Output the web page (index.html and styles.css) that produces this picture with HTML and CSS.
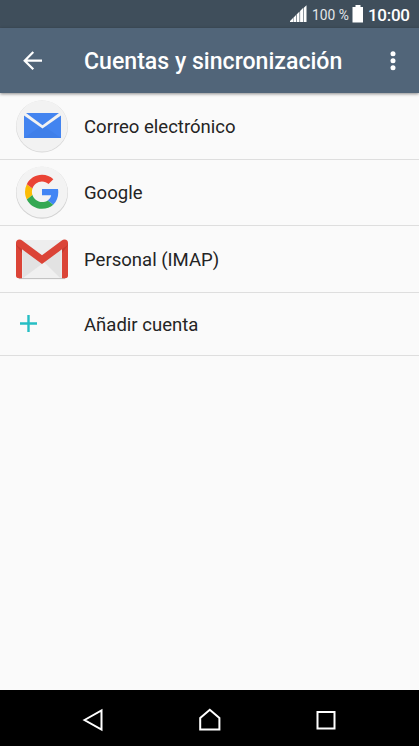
FILE: index.html
```html
<!DOCTYPE html>
<html lang="es">
<head>
<meta charset="utf-8">
<title>Cuentas y sincronización</title>
<link rel="stylesheet" href="styles.css">
</head>
<body>
<div class="phone">
  <div class="status">
    <svg class="signal" width="18" height="18" viewBox="0 0 18 18" fill="#fff"><path d="M0 17v-1l3-3v4zM3.400 17v-4.300L6 10v7zM6.600 17V9.400L9.500 6.500V17zM10.100 17V6L13 3.100V17zM13.600 17V3L16.500.3V17z"/></svg>
    <span class="percent">100 %</span>
    <svg class="battery" width="12" height="18" viewBox="0 0 12 18" fill="#fff"><path d="M3.500 0h5v2H11v15.500H.5V2h3z"/></svg>
    <span class="clock">10:00</span>
  </div>
  <header class="bar">
    <svg class="back" width="20" height="20" viewBox="0 0 20 20" fill="none" stroke="#fff" stroke-width="2.200"><path d="M10.300 1L1.700 9.700l8.600 8.600M2 9.700h17"/></svg>
    <h1 class="title">Cuentas y sincronización</h1>
    <svg class="more" width="6" height="20" viewBox="0 0 6 20" fill="#fff"><circle cx="3" cy="2.700" r="2.500"/><circle cx="3" cy="9.700" r="2.500"/><circle cx="3" cy="16.700" r="2.500"/></svg>
  </header>
  <ul class="list">
    <li class="row">
      <span class="icon"><svg width="56" height="56" viewBox="0 0 56 56">
        <circle cx="28" cy="28.400" r="26" fill="#d8d8d8"/><circle cx="28" cy="28" r="25.600" fill="#f2f2f2"/>
        <path d="M10 15h37v25H10z" fill="#4384f0"/><path d="M10 40l18.500-13L47 40z" fill="#3f7fe9"/>
        <path d="M10 15h37v2.500L28.500 30.500 10 17.500z" fill="#f2f2f2"/><path d="M12 15h33L28.500 27.300z" fill="#4384f0"/>
      </svg></span>
      <span class="label">Correo electrónico</span>
    </li>
    <li class="row">
      <span class="icon"><svg width="56" height="56" viewBox="0 0 56 56">
        <circle cx="28" cy="28.700" r="26" fill="#d2d2d2"/><circle cx="28" cy="28" r="25.600" fill="#f3f3f3"/>
        <g transform="translate(11 10.800) scale(.708)">
        <path fill="#4285f4" d="M46.980 24.550c0-1.570-.15-3.090-.38-4.550H24v9.020h12.940c-.58 2.960-2.260 5.480-4.780 7.180l7.730 6c4.510-4.180 7.090-10.360 7.090-17.650z"/>
        <path fill="#fbbc05" d="M10.530 28.590A14.500 14.500 0 0 1 9.770 24c0-1.600.27-3.140.76-4.590l-7.980-6.190A23.900 23.900 0 0 0 0 24c0 3.880.92 7.540 2.560 10.780z"/>
        <path fill="#ea4335" d="M24 9.500c3.540 0 6.710 1.220 9.210 3.600l6.850-6.850C35.900 2.380 30.470 0 24 0 14.620 0 6.510 5.380 2.560 13.220l7.980 6.190C12.430 13.720 17.740 9.500 24 9.500z"/>
        <path fill="#34a853" d="M24 48c6.480 0 11.930-2.130 15.890-5.810l-7.730-6c-2.150 1.450-4.920 2.300-8.160 2.300-6.260 0-11.570-4.220-13.470-9.910l-7.980 6.190C6.510 42.620 14.620 48 24 48z"/>
        </g>
      </svg></span>
      <span class="label">Google</span>
    </li>
    <li class="row">
      <span class="icon"><svg width="56" height="56" viewBox="0 0 56 56">
        <path d="M5 47.600h46" stroke="#bdbdbd" stroke-width="1"/>
        <rect x="4" y="9" width="48" height="38" fill="#e9e9e9"/>
        <path d="M8 47l20-18 18 18z" fill="#f0f0f0"/><path d="M9 19l19 14L9 47z" fill="#e2e2e2"/><path d="M8.500 18v7l8 6 12-1.500 18 17.500V18L28 32z" fill="#e2e2e2"/>
        <path d="M8 9h40L28 24z" fill="#eee"/>
        <path fill="#db4437" d="M2 12q0-3.500 3.500-3.500 1.500 0 3 1.200L28 24.300 47.500 9.700q1.500-1.200 3-1.200Q54 8.500 54 12v32.500q0 2.700-2.700 2.700H48V18.300L28 33 8 18.300v28.900H4.700Q2 47.200 2 44.500z"/>
        <path d="M2 12q0 1.800 1.500 3L8 18.300v4L2 14zM54 12q0 1.800-1.500 3L48 18.300v4l6-8.300z" fill="#c53a30"/>
      </svg></span>
      <span class="label">Personal (IMAP)</span>
    </li>
    <li class="row add">
      <span class="icon"><svg class="plus" width="18" height="18" viewBox="0 0 18 18" stroke="#26bec4" stroke-width="2.400"><path d="M8.500 0v17M0 8.500h17"/></svg></span>
      <span class="label">Añadir cuenta</span>
    </li>
  </ul>
  <nav class="nav">
    <svg width="24" height="24" viewBox="0 0 24 24"><path d="M3.500 12L20.500 2.500v19z"/></svg>
    <svg width="24" height="24" viewBox="0 0 24 24"><path d="M2.200 10L11.800 1.700 21.400 10v11.500H2.200z"/></svg>
    <svg width="24" height="24" viewBox="0 0 24 24"><path d="M3.500 4h17v16.500h-17z"/></svg>
  </nav>
</div>
</body>
</html>
```
FILE: styles.css
```css
* { box-sizing: border-box; }
body { margin: 0; font-family: Roboto, "Liberation Sans", sans-serif; }
svg { display: block; flex: none; }
.phone { width: 419px; height: 746px; display: flex; flex-direction: column; background: #fafafa; overflow: hidden; }
.status { height: 28px; flex: none; display: flex; align-items: center; justify-content: flex-end; padding-right: 10px; background: #3f4e5b; color: #fff; white-space: nowrap; }
.signal { margin-right: 4px; }
.percent { width: 38px; margin-top: 1px; font-size: 13.800px; color: #e3e7ea; }
.battery { margin: 0 4px 0 2px; }
.clock { width: 41px; margin-top: 1px; font-size: 17px; font-weight: 500; letter-spacing: -.3px; }
.bar { height: 65px; flex: none; display: flex; align-items: center; padding: 0 23px; background: #516579; color: #fff; box-shadow: 0 1px 3px rgba(0,0,0,.45); z-index: 1; }
.title { flex: 1; margin: 3px 0 0 41px; font-size: 23.100px; font-weight: 500; line-height: 30px; white-space: nowrap; }
.list { flex: 1; margin: 0; padding: 0; list-style: none; }
.row { height: 66.500px; display: flex; align-items: center; border-bottom: 1.500px solid #dedede; }
.row:first-child { height: 66.500px; }
.icon { width: 84px; padding-left: 14px; flex: none; }
.label { margin-top: 2px; font-size: 18.550px; line-height: 24px; color: #242424; white-space: nowrap; }
.row.add { height: 63.500px; }
.plus { margin-left: 6px; }
.nav { height: 56px; flex: none; display: flex; justify-content: space-between; align-items: center; padding: 4px 81px 0; background: #000; }
.nav path { fill: none; stroke: #fff; stroke-width: 2; }
```
